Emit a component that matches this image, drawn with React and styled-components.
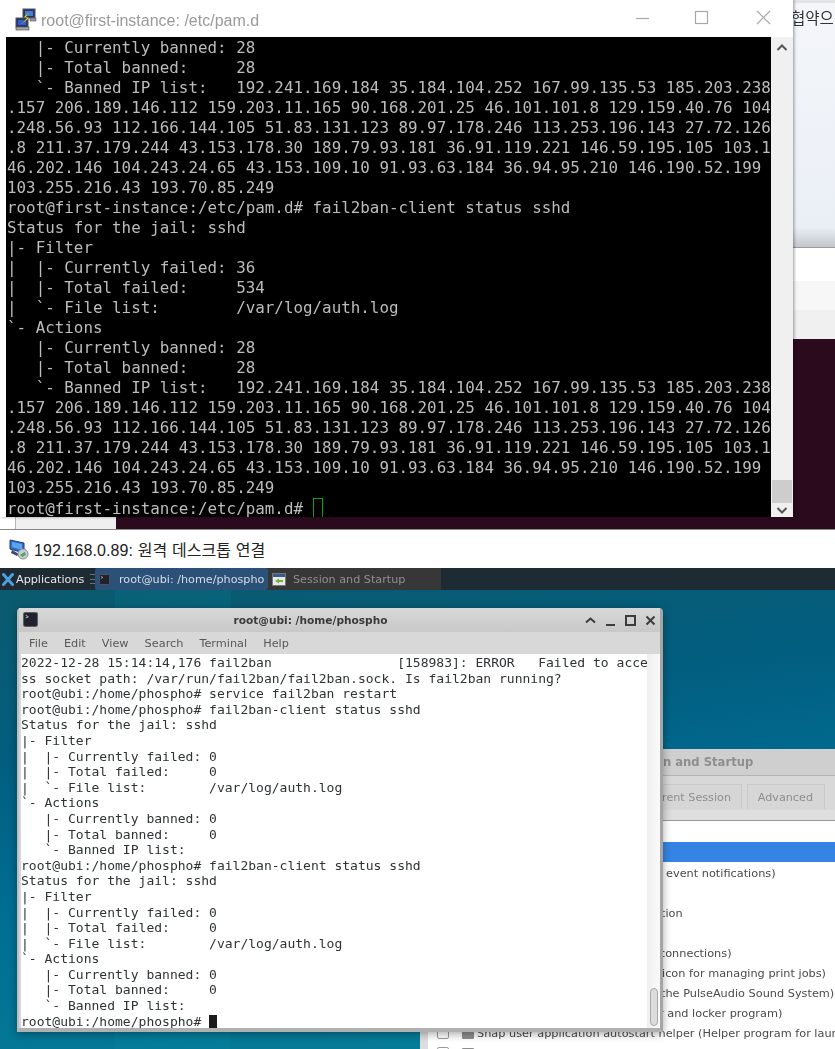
import React from 'react'
import styled, { createGlobalStyle } from 'styled-components'

const GlobalStyle = createGlobalStyle`
  html, body {
    margin: 0;
    padding: 0;
    background: #fff;
  }
`

const Page = styled.div`
  width: 835px;
  height: 1049px;
  overflow: hidden;
  display: flex;
  flex-direction: column;
`

/* ---------- top screen: putty over an ubuntu desktop ---------- */

const TopScreen = styled.div`
  position: relative;
  height: 530px;
  flex: none;
  background: #2c0a1e;
  border-bottom: 1px solid #8a8a8a;
  box-sizing: border-box;
  filter: blur(0.25px);
`

const BackdropStrip = styled.div`
  position: absolute;
  left: 793px;
  top: 0;
  width: 42px;
  height: 339px;
  overflow: hidden;
  display: grid;
  grid-template-rows: 248px 33px 29px 29px;
`

const BackdropBlue = styled.div`
  background: linear-gradient(180deg, #f4f6fa 0%, #eaeff6 92%, #c3c7cc 100%);
  border-top: 3px solid #e4e4e4;
  border-bottom: 1px solid #9a9a9a;
  box-sizing: border-box;
`

const BackdropBand = styled.div`
  background: ${({ $color }) => $color};
`

const BackdropText = styled.div`
  position: absolute;
  left: -2px;
  top: 6px;
  width: 60px;
  white-space: nowrap;
  font: 15.5px "Noto Sans CJK KR", sans-serif;
  color: #333;
`

const BackdropFoot = styled.div`
  position: absolute;
  left: 0;
  top: 517px;
  width: 116px;
  height: 12px;
  background: linear-gradient(90deg, #fff 0, #fff 15px, #b5b5b5 15px, #b5b5b5 16px, #f0f0f0 16px);
`

const PuttyWindow = styled.div`
  position: absolute;
  left: 0;
  top: 0;
  width: 793px;
  height: 517px;
  background: #fff;
  box-shadow: 1px 0 3px rgba(0, 0, 0, 0.4);
  display: flex;
  flex-direction: column;
`

const PuttyTitle = styled.div`
  height: 37px;
  flex: none;
  display: flex;
  align-items: center;
  padding-left: 15px;
  font: 16px "Liberation Sans", sans-serif;
  color: #9a9a9a;
`

const PuttyTitleText = styled.span`
  margin-left: 4px;
  flex: 1;
  position: relative;
  top: 2px;
`

const CaptionButton = styled.svg`
  position: absolute;
  top: 9px;
  left: ${({ $x }) => $x}px;
  width: 17px;
  height: 17px;
  fill: none;
  stroke: #a8a8a8;
  stroke-width: 1.2;
`

const PuttyBody = styled.div`
  flex: 1;
  display: flex;
  padding-left: 6px;
  min-height: 0;
`

const PuttyScreen = styled.pre`
  flex: 1;
  margin: 0;
  background: #000;
  color: #bcbcbc;
  font-family: "DejaVu Sans Mono", monospace;
  font-size: 15.87px;
  line-height: 20px;
  padding: 1px 0 0 1px;
  overflow: hidden;
`

const PuttyCursor = styled.span`
  display: inline-block;
  width: 8px;
  height: 18px;
  border: 1px solid #00a800;
  vertical-align: -4px;
`

const PuttyScrollbar = styled.div`
  width: 22px;
  flex: none;
  background: #f0f0f0;
  display: flex;
  flex-direction: column;
  align-items: center;
  justify-content: space-between;
  padding: 5px 0 1px;
  box-sizing: border-box;
`

const PuttyThumb = styled.div`
  width: 20px;
  height: 23px;
  margin-top: auto;
  margin-bottom: 1px;
  background: #cdcdcd;
`

const ScrollArrow = styled.svg`
  width: 12px;
  height: 12px;
  fill: none;
  stroke: #555;
  stroke-width: 2;
  flex: none;
`

/* ---------- rdp caption ---------- */

const RdpCaption = styled.div`
  height: 38px;
  flex: none;
  background: #fff;
  display: flex;
  align-items: center;
  gap: 5px;
  padding-left: 9px;
  font: 16px "Liberation Sans", "Noto Sans CJK KR", sans-serif;
  letter-spacing: 0.1px;
  color: #222;
`

/* ---------- xfce panel ---------- */

const RemoteScreen = styled.div`
  flex: 1;
  display: flex;
  flex-direction: column;
  min-height: 0;
  filter: blur(0.4px);
`

const Panel = styled.div`
  height: 22px;
  flex: none;
  background: #1f2b33;
  display: flex;
  align-items: stretch;
  font: 11.2px "DejaVu Sans", sans-serif;

  svg {
    flex: none;
  }
`

const AppMenu = styled.div`
  width: 90px;
  display: flex;
  align-items: center;
  gap: 2px;
  padding-left: 2px;
  box-sizing: border-box;
  color: #e8e8e8;
`

const PanelDots = styled.div`
  width: 5px;
  margin: 6px 0;
  border-top: 1px solid #6a7278;
  border-bottom: 1px solid #6a7278;
  background: linear-gradient(#6a7278, #6a7278) center / 100% 1px no-repeat;
`

const TaskButton = styled.div`
  width: 173px;
  display: flex;
  align-items: center;
  box-sizing: border-box;
  padding-left: 4px;
  white-space: nowrap;
  overflow: hidden;
  color: ${({ $active }) => ($active ? '#d5dde6' : '#8f8f8f')};
  background: ${({ $active }) => ($active ? '#2b5178' : '#373737')};
  border-radius: ${({ $active }) => ($active ? '2px' : '0')};
`

const TaskLabel = styled.span`
  margin-left: ${({ $gap }) => $gap}px;
`

/* ---------- remote desktop ---------- */

const Desktop = styled.div`
  position: relative;
  flex: 1;
  overflow: hidden;
  background:
    linear-gradient(90deg, rgba(255, 255, 255, 0) 115px, rgba(0, 150, 170, 0.12) 115px, rgba(0, 150, 170, 0.12) 231px, rgba(255, 255, 255, 0) 231px),
    linear-gradient(172deg, #0b5a6e 0%, #025e80 30%, #006d93 55%, #087f98 100%);
`

const TerminalWindow = styled.div`
  position: absolute;
  left: 17px;
  top: 18px;
  width: 646px;
  height: 424px;
  box-sizing: border-box;
  background: #d6d6d6;
  border-radius: 4px 4px 0 0;
  border-right: 3px solid #a5a5a5;
  border-bottom: 4px solid #b0b0b0;
  border-left: 2px solid #bdbdbd;
  box-shadow: 0 2px 9px rgba(0, 0, 0, 0.35);
  display: flex;
  flex-direction: column;
`

const TerminalTitle = styled.div`
  height: 24px;
  flex: none;
  position: relative;
  display: flex;
  align-items: center;
  justify-content: center;
  padding-right: 58px;
  background: linear-gradient(180deg, #d8d8d8, #c8c8c8);
  font: bold 10.6px "DejaVu Sans", sans-serif;
  color: #3a3a3a;
`

const TerminalIconSlot = styled.div`
  position: absolute;
  left: 4px;
  top: 4px;
  display: flex;
`

const WindowButtons = styled.div`
  position: absolute;
  right: 3px;
  top: 6px;
  display: flex;
  gap: 7px;
`

const WindowButton = styled.svg`
  width: 13px;
  height: 13px;
  fill: none;
  stroke: #3c3c3c;
  stroke-width: 2;
`

const MenuBar = styled.div`
  height: 22px;
  flex: none;
  display: flex;
  align-items: center;
  gap: 16px;
  padding-left: 10px;
  background: #d8d8d8;
  font: 11.3px "DejaVu Sans", sans-serif;
  color: #585858;
`

const TerminalBody = styled.div`
  flex: 1;
  display: flex;
  min-height: 0;
  padding-left: 2px;
`

const TerminalScreen = styled.pre`
  flex: 1;
  margin: 0;
  background: #fff;
  color: #2e3436;
  font-family: "DejaVu Sans Mono", monospace;
  font-size: 13.03px;
  line-height: 15.6px;
  padding-top: 1px;
  overflow: hidden;
`

const TerminalCursor = styled.span`
  display: inline-block;
  width: 8px;
  height: 14px;
  background: #1a1a1a;
  vertical-align: -3px;
`

const TerminalScrollbar = styled.div`
  width: 13px;
  flex: none;
  background: linear-gradient(90deg, #efefef, #fafafa);
  display: flex;
  justify-content: center;
  align-items: flex-end;
  padding-bottom: 2px;
  box-sizing: border-box;
`

const TerminalThumb = styled.div`
  width: 6px;
  height: 36px;
  background: #dcdcdc;
  border: 1px solid #a8a8a8;
  border-radius: 4px;
`

const SessionWindow = styled.div`
  position: absolute;
  left: 420px;
  top: 159px;
  width: 415px;
  height: 300px;
  background: #dedede;
  display: flex;
  flex-direction: column;
`

const SessionTitle = styled.div`
  height: 27px;
  flex: none;
  display: flex;
  align-items: center;
  padding-left: 243px;
  background: #cfcfcf;
  border-bottom: 1px solid #b4b4b4;
  box-sizing: border-box;
  font: bold 11.6px "DejaVu Sans", sans-serif;
  color: #8e8e8e;
`

const SessionTabs = styled.div`
  height: 34px;
  flex: none;
  display: flex;
  gap: 5px;
  padding: 8px 0 0 189px;
  box-sizing: border-box;
  background: #d8d8d8;
`

const SessionTab = styled.div`
  height: 25px;
  width: ${({ $width }) => $width}px;
  flex: none;
  display: flex;
  align-items: center;
  justify-content: flex-end;
  padding-right: ${({ $pad }) => $pad}px;
  box-sizing: border-box;
  background: #d6d6d6;
  border: 1px solid #cacaca;
  border-bottom: none;
  font: 11.2px "DejaVu Sans", sans-serif;
  color: #8e8e8e;
`

const SessionGap = styled.div`
  height: 10px;
  flex: none;
  background: #dedede;
  border-bottom: 1px solid #999;
`

const SessionBody = styled.div`
  flex: 1;
  margin-left: 8px;
  padding-top: 1px;
  background: #fff;
  font: 11.3px "DejaVu Sans", sans-serif;
  color: #4a4a4a;
`

const SessionRow = styled.div`
  height: 20px;
  display: flex;
  align-items: center;
  box-sizing: border-box;
  white-space: nowrap;
  padding: 2px 0 0 ${({ $indent }) => $indent}px;
  background: ${({ $selected }) => ($selected ? '#3584e4' : 'transparent')};
`

const SessionCheck = styled.span`
  width: 12px;
  height: 12px;
  margin-right: 13px;
  border: 1px solid #9a9a9a;
  border-radius: 2px;
  box-sizing: border-box;
  flex: none;
`

const SessionIcon = styled.span`
  width: 12px;
  height: 11px;
  margin-right: 3px;
  background: #8d8d8d;
  border-radius: 1px;
  flex: none;
`

/* ---------- drawings ---------- */

const PuttyIcon = () => (
  <svg width="22" height="24" viewBox="0 0 22 24">
    <rect x="8" y="2" width="12" height="9" fill="#29306e" stroke="#555" />
    <rect x="10" y="4" width="8" height="5" fill="#3f7fd8" />
    <rect x="15" y="11" width="6" height="3" fill="#9a9a9a" stroke="#555" strokeWidth="0.6" />
    <rect x="1" y="11" width="12" height="9" fill="#29306e" stroke="#555" />
    <rect x="3" y="13" width="8" height="5" fill="#2a60d8" />
    <rect x="1" y="20" width="13" height="3" fill="#a8a8a8" stroke="#444" strokeWidth="0.6" />
    <path d="M14 5 L9 10 L12 11 L7 17 L14 11 L11 10 Z" fill="#f2dc3c" stroke="#8a7a10" strokeWidth="0.4" />
  </svg>
)

const RdpIcon = () => (
  <svg width="20" height="22" viewBox="0 0 20 22">
    <path d="M1 2 L15 5 L15 15 L1 11 Z" fill="#2f6fd0" stroke="#1d3c78" />
    <path d="M3 4 L13 6 L13 12 L3 9 Z" fill="#5aa4ee" />
    <path d="M3 12 L10 16 L8 18 L2 15 Z" fill="#3a4a66" />
    <circle cx="14" cy="16" r="5" fill="#c8cdd2" stroke="#8a8f96" />
    <path d="M11.5 17.5 L16 14.5 M13 18.5 L16.5 16" stroke="#3a9a3a" strokeWidth="1.3" />
  </svg>
)

const XfceIcon = () => (
  <svg width="12" height="13" viewBox="0 0 12 13">
    <path d="M1.5 1.5 L10.5 11.5 M10.5 1.5 L1.5 11.5" stroke="#4aa0e0" strokeWidth="3" strokeLinecap="round" />
  </svg>
)

const ConsoleIcon = ({ size }) => (
  <svg width={size} height={size} viewBox="0 0 14 14">
    <rect x="0.5" y="0.5" width="13" height="13" rx="1.5" fill="#20232e" stroke="#5a5f68" />
    <path d="M2.5 3 L5 4.5 L2.5 5.5" fill="none" stroke="#d0d0d0" strokeWidth="0.8" />
  </svg>
)

const SettingsIcon = () => (
  <svg width="14" height="13" viewBox="0 0 14 13">
    <rect x="0.5" y="0.5" width="13" height="12" fill="#e8e8e8" stroke="#777" />
    <rect x="1" y="1" width="12" height="3" fill="#3a5a8a" />
    <path d="M3 8 L7 5.5 L7 7 L11 7 L11 9 L7 9 L7 10.5 Z" fill="#6cb33a" />
  </svg>
)

/* ---------- content ---------- */

const ipBlock = [
  '   `- Banned IP list:   192.241.169.184 35.184.104.252 167.99.135.53 185.203.238',
  '.157 206.189.146.112 159.203.11.165 90.168.201.25 46.101.101.8 129.159.40.76 104',
  '.248.56.93 112.166.144.105 51.83.131.123 89.97.178.246 113.253.196.143 27.72.126',
  '.8 211.37.179.244 43.153.178.30 189.79.93.181 36.91.119.221 146.59.195.105 103.1',
  '46.202.146 104.243.24.65 43.153.109.10 91.93.63.184 36.94.95.210 146.190.52.199',
  '103.255.216.43 193.70.85.249',
]

const puttyLines = [
  '   |- Currently banned: 28',
  '   |- Total banned:     28',
  ...ipBlock,
  'root@first-instance:/etc/pam.d# fail2ban-client status sshd',
  'Status for the jail: sshd',
  '|- Filter',
  '|  |- Currently failed: 36',
  '|  |- Total failed:     534',
  '|  `- File list:        /var/log/auth.log',
  '`- Actions',
  '   |- Currently banned: 28',
  '   |- Total banned:     28',
  ...ipBlock,
].join('\n')

const jailStatus = [
  'Status for the jail: sshd',
  '|- Filter',
  '|  |- Currently failed: 0',
  '|  |- Total failed:     0',
  '|  `- File list:        /var/log/auth.log',
  '`- Actions',
  '   |- Currently banned: 0',
  '   |- Total banned:     0',
  '   `- Banned IP list:',
]

const terminalLines = [
  '2022-12-28 15:14:14,176 fail2ban                [158983]: ERROR   Failed to acce',
  'ss socket path: /var/run/fail2ban/fail2ban.sock. Is fail2ban running?',
  'root@ubi:/home/phospho# service fail2ban restart',
  'root@ubi:/home/phospho# fail2ban-client status sshd',
  ...jailStatus,
  'root@ubi:/home/phospho# fail2ban-client status sshd',
  ...jailStatus,
].join('\n')

const menuItems = ['File', 'Edit', 'View', 'Search', 'Terminal', 'Help']

const sessionRows = [
  { indent: 0, text: '' },
  { indent: 0, text: '', selected: true },
  { indent: 238, text: 'event notifications)' },
  { indent: 0, text: '' },
  { indent: 233, text: 'tion' },
  { indent: 0, text: '' },
  { indent: 231, text: 'connections)' },
  { indent: 234, text: 'icon for managing print jobs)' },
  { indent: 233, text: 'the PulseAudio Sound System)' },
  { indent: 231, text: 'r and locker program)' },
  { indent: 9, text: 'Snap user application autostart helper (Helper program for laun', check: true },
  { indent: 9, text: 'Spice vdagent (Agent for Spice guests)', check: true },
]

function App() {
  return (
    <Page>
      <GlobalStyle />
      <TopScreen>
        <BackdropStrip>
          <BackdropBlue />
          <BackdropBand $color="#ffffff" />
          <BackdropBand $color="#f7f7f7" />
          <BackdropBand $color="#f0f0f0" />
          <BackdropText>협약으</BackdropText>
        </BackdropStrip>
        <BackdropFoot />
        <PuttyWindow>
          <PuttyTitle>
            <PuttyIcon />
            <PuttyTitleText>root@first-instance: /etc/pam.d</PuttyTitleText>
            <CaptionButton $x={634} viewBox="0 0 17 17"><path d="M2 9.5 H15" /></CaptionButton>
            <CaptionButton $x={693} viewBox="0 0 17 17"><rect x="2.5" y="2.5" width="12" height="12" /></CaptionButton>
            <CaptionButton $x={755} viewBox="0 0 17 17"><path d="M2 2 L15 15 M15 2 L2 15" /></CaptionButton>
          </PuttyTitle>
          <PuttyBody>
            <PuttyScreen>
              {puttyLines}
              {'\n'}
              root@first-instance:/etc/pam.d# <PuttyCursor />
            </PuttyScreen>
            <PuttyScrollbar>
              <ScrollArrow viewBox="0 0 12 12"><path d="M1.5 8 L6 3.5 L10.5 8" /></ScrollArrow>
              <PuttyThumb />
              <ScrollArrow viewBox="0 0 12 12"><path d="M1.5 4 L6 8.5 L10.5 4" /></ScrollArrow>
            </PuttyScrollbar>
          </PuttyBody>
        </PuttyWindow>
      </TopScreen>

      <RdpCaption>
        <RdpIcon />
        <span>192.168.0.89: 원격 데스크톱 연결</span>
      </RdpCaption>

      <RemoteScreen>
        <Panel>
          <AppMenu>
            <XfceIcon />
            <span>Applications</span>
          </AppMenu>
          <PanelDots />
          <TaskButton $active>
            <ConsoleIcon size={11} />
            <TaskLabel $gap={9}>root@ubi: /home/phospho</TaskLabel>
          </TaskButton>
          <TaskButton>
            <SettingsIcon />
            <TaskLabel $gap={7}>Session and Startup</TaskLabel>
          </TaskButton>
        </Panel>

        <Desktop>
          <SessionWindow>
            <SessionTitle>n and Startup</SessionTitle>
            <SessionTabs>
              <SessionTab $width={133} $pad={10}>Current Session</SessionTab>
              <SessionTab $width={78} $pad={11}>Advanced</SessionTab>
            </SessionTabs>
            <SessionGap />
            <SessionBody>
              {sessionRows.map((row, i) => (
                <SessionRow key={i} $indent={row.indent} $selected={row.selected}>
                  {row.check && <SessionCheck />}
                  {row.check && <SessionIcon />}
                  {row.text}
                </SessionRow>
              ))}
            </SessionBody>
          </SessionWindow>

          <TerminalWindow>
            <TerminalTitle>
              <TerminalIconSlot><ConsoleIcon size={15} /></TerminalIconSlot>
              root@ubi: /home/phospho
              <WindowButtons>
                <WindowButton viewBox="0 0 13 13"><path d="M2 8.5 L6.5 4.5 L11 8.5" /></WindowButton>
                <WindowButton viewBox="0 0 13 13"><path d="M2 11 H11" /></WindowButton>
                <WindowButton viewBox="0 0 13 13"><rect x="2" y="2" width="9" height="9" /></WindowButton>
                <WindowButton viewBox="0 0 13 13"><path d="M2.5 2.5 L10.5 10.5 M10.5 2.5 L2.5 10.5" /></WindowButton>
              </WindowButtons>
            </TerminalTitle>
            <MenuBar>
              {menuItems.map((item) => <span key={item}>{item}</span>)}
            </MenuBar>
            <TerminalBody>
              <TerminalScreen>
                {terminalLines}
                {'\n'}
                root@ubi:/home/phospho# <TerminalCursor />
              </TerminalScreen>
              <TerminalScrollbar>
                <TerminalThumb />
              </TerminalScrollbar>
            </TerminalBody>
          </TerminalWindow>
        </Desktop>
      </RemoteScreen>
    </Page>
  )
}

export default App
